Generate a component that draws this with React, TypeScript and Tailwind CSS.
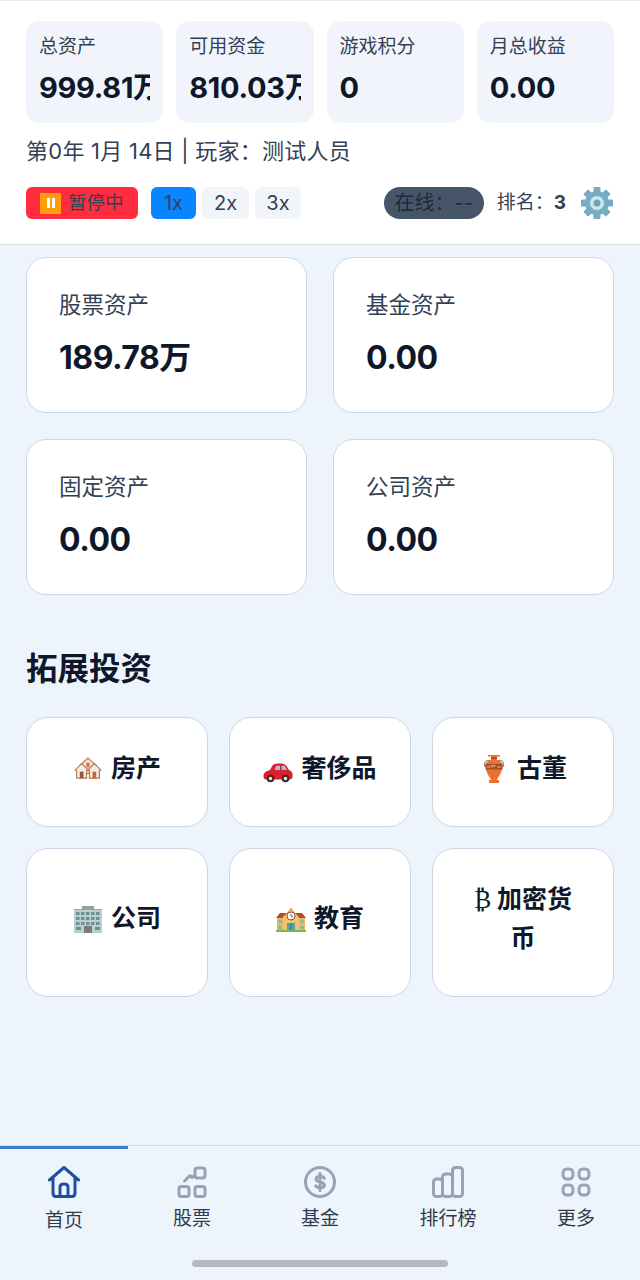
import React from 'react';

const FONT = 'font-["Inter","Noto_Sans_CJK_SC",sans-serif]';

const STATS = [
  { label: '总资产', value: '999.81万', clipped: true },
  { label: '可用资金', value: '810.03万', clipped: true },
  { label: '游戏积分', value: '0', clipped: false },
  { label: '月总收益', value: '0.00', clipped: false },
];

const ASSETS = [
  { label: '股票资产', value: '189.78万' },
  { label: '基金资产', value: '0.00' },
  { label: '固定资产', value: '0.00' },
  { label: '公司资产', value: '0.00' },
];

const Houses = () => (
  <svg width="30" height="26" viewBox="-1.500 -1 33 28">
    <path d="M15 1 L24 9 V18 H6 V9 Z" fill="#f3e2d2" stroke="#b5784f" strokeWidth="1.2" />
    <ellipse cx="15" cy="8.500" rx="2" ry="3" fill="#d07a4d" />
    <path d="M8 7 L15 14 L13.500 14.500 V23 H2.500 V14.500 L1 14 Z" fill="#f6ebdf" stroke="#b5784f" strokeWidth="1.2" />
    <path d="M22 7 L29 14 L27.500 14.500 V23 H16.500 V14.500 L15 14 Z" fill="#f6ebdf" stroke="#c4683c" strokeWidth="1.2" />
    <rect x="6" y="16" width="4" height="7" fill="#8a5a44" />
    <rect x="20" y="16" width="4" height="7" fill="#c4683c" />
  </svg>
);

const Car = () => (
  <svg width="30" height="31" viewBox="0 -10 30 31">
    <path d="M.5 13 C.5 10 3 8 7 7 L9.500 2.500 C10.500 1 13 .5 16 .5 C20 .5 22 1 23.500 3 L26 7 C29 8 30 10.500 29.500 14 C29 16.500 27 16.500 25 16.500 H5 C2 16.500 .5 16 .5 13 Z" fill="#dd1e2c" />
    <path d="M11.500 7 L13.200 2.800 H17 V7 Z M18.500 7 V2.800 H21.800 L24 7 Z" fill="#9cc3d8" />
    <circle cx="7.500" cy="15.500" r="3.800" fill="#3a2a2a" />
    <circle cx="7.500" cy="15.500" r="1.700" fill="#e8e8e8" />
    <circle cx="22.500" cy="15.500" r="3.800" fill="#3a2a2a" />
    <circle cx="22.500" cy="15.500" r="1.700" fill="#e8e8e8" />
  </svg>
);

const Amphora = () => (
  <svg width="30" height="30" viewBox="-5 0 30 30">
    <path d="M4 1 H16 V2.500 H13 V6 C17 7 19 9 18.500 13 C18 19 14 23 13 26 H15 V29 H5 V26 H7 C6 23 2 19 1.500 13 C1 9 3 7 7 6 V2.500 H4 Z" fill="#ee6f30" />
    <path d="M6 7 C2 5 0 8 .8 13 M14 7 C18 5 20 8 19.200 13" fill="none" stroke="#8a5a40" strokeWidth="1" />
    <rect x="1.600" y="10" width="16.800" height="5.500" fill="#a0522a" />
    <path d="M3 13 H6 V11.500 M8 14 V11.500 H11 V13 M13 13 H17" fill="none" stroke="#f5a878" strokeWidth="1" />
    <rect x="7" y="3" width="6" height="2" fill="#a0522a" />
  </svg>
);

const Office = () => (
  <svg width="30" height="27" viewBox="0 0 30 27">
    <rect x="1" y="3" width="28" height="24" fill="#b9d0cf" />
    <rect x="9" y="0" width="12" height="3" fill="#8fa6a6" />
    <rect x="1" y="3" width="28" height="1" fill="#8fa6a6" />
    {[6, 11, 16].map((y) => [3, 8, 13, 18, 23].map((x) => (
      <rect key={`${x}-${y}`} x={x} y={y} width="3.500" height="3" fill="#6b9296" />
    )))}
    <rect x="3" y="21" width="5" height="3" fill="#6b9296" />
    <rect x="22" y="21" width="5" height="3" fill="#6b9296" />
    <rect x="11" y="20" width="8" height="7" fill="#77797c" />
  </svg>
);

const School = () => (
  <svg width="30" height="26" viewBox="0 0 30 26">
    <rect x="1" y="11" width="28" height="14" fill="#efb55d" />
    <path d="M0 12 L4 7 H11 L15 2 L19 7 H26 L30 12 Z" fill="#b94a2c" />
    <path d="M7 25 V11 L15 3 L23 11 V25 Z" fill="#f2c26f" />
    <circle cx="15" cy="10" r="4" fill="#fff" stroke="#8a5a2c" strokeWidth="1" />
    <path d="M15 8 V10 L17 11" stroke="#333" strokeWidth=".8" fill="none" />
    <rect x="11" y="17" width="8" height="8" fill="#4fa3a8" />
    <rect x="14.500" y="17" width="1" height="8" fill="#2f7478" />
    <rect x="2.500" y="14" width="3" height="3" fill="#7fb7a0" />
    <rect x="2.500" y="20" width="3" height="3" fill="#7fb7a0" />
    <rect x="24.500" y="14" width="3" height="3" fill="#7fb7a0" />
    <rect x="24.500" y="20" width="3" height="3" fill="#7fb7a0" />
    <rect x="0" y="24" width="30" height="2" fill="#79b84a" />
  </svg>
);

const Gear = () => (
  <svg width="34" height="34" viewBox="0 0 34 34">
    <g fill="#74adc4">
      {[0, 45, 90, 135, 180, 225, 270, 315].map((a) => (
        <rect key={a} x="13.500" y="1" width="7" height="8" rx="1" transform={`rotate(${a} 17 17)`} />
      ))}
      <circle cx="17" cy="17" r="12" />
    </g>
    <circle cx="17" cy="17" r="7" fill="#d3e4ea" />
    <circle cx="17" cy="17" r="3.500" fill="#6ea3ba" />
  </svg>
);

const NAV_STROKE = '#94a3b5';

const NAV = [
  {
    label: '首页',
    icon: (
      <svg width="32" height="32" viewBox="0 0 32 32" fill="none" stroke="#1e4fa3" strokeWidth="3" strokeLinejoin="round" strokeLinecap="round">
        <path d="M1.500 14 L16 1.500 L30.500 14" />
        <path d="M5 12 V27 C5 29.500 6 30.500 8 30.500 H24 C26 30.500 27 29.500 27 27 V12" />
        <path d="M12 30.500 V21 C12 19 13 18 16 18 C19 18 20 19 20 21 V30.500" />
      </svg>
    ),
  },
  {
    label: '股票',
    icon: (
      <svg width="30" height="32" viewBox="0 0 30 32" fill="none" stroke={NAV_STROKE} strokeWidth="3" strokeLinejoin="round" strokeLinecap="round">
        <rect x="2" y="20.500" width="10" height="10" rx="2.500" />
        <rect x="18" y="20.500" width="10" height="10" rx="2.500" />
        <rect x="18" y="2" width="10" height="10" rx="2.500" />
        <path d="M7.500 15 L13 9.500 L15 11.500 L17.500 9.500" />
      </svg>
    ),
  },
  {
    label: '基金',
    icon: (
      <svg width="32" height="32" viewBox="0 0 32 32" fill="none" stroke={NAV_STROKE} strokeWidth="3" strokeLinecap="round">
        <circle cx="16" cy="16" r="14.500" />
        <path d="M20.200 12.300 C19.500 10.800 18 10.300 16 10.300 C13.800 10.300 12 11.400 12 13.100 C12 17 20.400 15 20.400 19 C20.400 20.800 18.500 21.800 16 21.800 C14 21.800 12.500 21.200 11.700 19.800 M16 7.500 V24.500" />
      </svg>
    ),
  },
  {
    label: '排行榜',
    icon: (
      <svg width="32" height="32" viewBox="0 0 32 32" fill="none" stroke={NAV_STROKE} strokeWidth="3" strokeLinejoin="round">
        <rect x="1.500" y="13" width="9" height="17.500" rx="3" />
        <rect x="10.500" y="8" width="10" height="22.500" rx="3" />
        <rect x="20.500" y="1.500" width="10" height="29" rx="3" />
      </svg>
    ),
  },
  {
    label: '更多',
    icon: (
      <svg width="30" height="30" viewBox="0 0 30 30" fill="none" stroke={NAV_STROKE} strokeWidth="3">
        <rect x="2" y="2" width="10" height="10" rx="4" />
        <rect x="18" y="2" width="10" height="10" rx="4" />
        <rect x="2" y="18" width="10" height="10" rx="4" />
        <rect x="18" y="18" width="10" height="10" rx="4" />
      </svg>
    ),
  },
];

const INVEST = [
  { label: '房产', icon: <Houses /> },
  { label: '奢侈品', icon: <Car /> },
  { label: '古董', icon: <Amphora /> },
  { label: '公司', icon: <Office /> },
  { label: '教育', icon: <School /> },
];

export default function App() {
  return (
    <div className={`${FONT} flex h-[1280px] w-[640px] flex-col overflow-hidden bg-[#eef4fb] text-[#0f172a]`}>
      {/* 顶部资产栏 */}
      <div className="flex-none border-t border-b border-t-[#e8ecf1] border-b-[#d5dde6] bg-white px-[26px] pt-[20px] pb-[25px]">
        <div className="grid grid-cols-4 gap-[13px]">
          {STATS.map((s) => (
            <div key={s.label} className="relative h-[102px] overflow-hidden rounded-[14px] bg-[#f1f5fb] px-[13px] pt-[13px]">
              <div className="text-[19px] leading-[26px] text-[#334155]">{s.label}</div>
              <div className="mt-[10px] overflow-hidden whitespace-nowrap text-[29px] leading-[36px] font-bold tracking-[-0.3px]">{s.value}</div>
              {s.clipped && <span className="absolute top-[75px] right-[13px] h-[3px] w-[2px] bg-[#0f172a]" />}
            </div>
          ))}
        </div>
        <div className="mt-[11px] text-[22px] leading-[34px] tracking-[0.25px] text-[#334155]">第0年 1月 14日 | 玩家：测试人员</div>
        <div className="mt-[19px] flex h-[32px] items-center">
          <div className="flex h-[32px] w-[112px] items-center rounded-[6px] bg-[#ff2d3d] pl-[14px] text-[18.5px] text-[#334155]">
            <span className="flex h-[21px] w-[21px] items-center justify-center gap-[2px] bg-[#ff9d0a]">
              <span className="h-[10px] w-[3px] bg-white" />
              <span className="h-[10px] w-[3px] bg-white" />
            </span>
            <span className="ml-[7px]">暂停中</span>
          </div>
          <div className="ml-[13px] flex gap-[6px] text-[20px] text-[#334155]">
            <span className="flex h-[32px] w-[45px] items-center justify-center rounded-[6px] bg-[#0a84ff]">1x</span>
            <span className="flex h-[32px] w-[47px] items-center justify-center rounded-[6px] bg-[#f1f5f9]">2x</span>
            <span className="flex h-[32px] w-[46px] items-center justify-center rounded-[6px] bg-[#f1f5f9]">3x</span>
          </div>
          <div className="ml-auto flex h-[32px] w-[100px] items-center justify-center rounded-full bg-[#475569] text-[20px] text-[#1e293b]">在线：--</div>
          <div className="ml-[13px] text-[19px] text-[#334155]">排名：<span className="font-bold">3</span></div>
          <div className="ml-[14px] flex"><Gear /></div>
        </div>
      </div>

      {/* 主体 */}
      <div className="min-h-0 flex-1 px-[26px] pt-[12px]">
        <div className="grid grid-cols-2 gap-x-[26px] gap-y-[26px]">
          {ASSETS.map((a) => (
            <div key={a.label} className="h-[156px] rounded-[20px] border border-[#cbd8e3] bg-white pt-[30px] pl-[32px]">
              <div className="text-[22.5px] leading-[34px] text-[#334155]">{a.label}</div>
              <div className="mt-[14px] text-[32px] leading-[44px] font-bold tracking-[-0.5px]">{a.value}</div>
            </div>
          ))}
        </div>
        <div className="mt-[52px] text-[31.5px] leading-[44px] font-bold">拓展投资</div>
        <div className="mt-[26px] grid grid-cols-3 gap-x-[21px] gap-y-[21px]">
          {INVEST.map((c) => (
            <div key={c.label} className="flex min-h-[110px] items-center justify-center gap-[8px] rounded-[22px] border border-[#cbd8e3] bg-white pb-[7px] text-[25px] font-bold">
              {c.icon}
              <span>{c.label}</span>
            </div>
          ))}
          <div className="flex min-h-[110px] items-center justify-center rounded-[22px] border border-[#cbd8e3] bg-white px-[30px] pt-[31px] pb-[38px] text-center text-[25px] leading-[39px] font-bold">
            <span><span className="font-['DejaVu_Sans'] font-normal">₿</span> 加密货币</span>
          </div>
        </div>
      </div>

      {/* 底部导航 */}
      <div className="h-[135px] flex-none">
        <div className="h-[3px] border-t border-[#d5dde6]">
          <div className="h-[3px] w-[128px] bg-[#3b82c4]" />
        </div>
        <div className="grid h-[84px] grid-cols-5 pt-[16px]">
          {NAV.map((n, i) => (
            <div key={n.label} className="flex flex-col items-center">
              <div className="flex h-[36px] items-center">{n.icon}</div>
              <div className={i === 0 ? 'mt-[7px] text-[19px] leading-[28px] text-[#2f3b4c]' : 'mt-[5px] text-[19px] leading-[28px] text-[#2f3b4c]'}>{n.label}</div>
            </div>
          ))}
        </div>
        <div className="mx-auto mt-[28px] h-[7px] w-[256px] rounded-full bg-[#b5b9c1]" />
      </div>
    </div>
  );
}
